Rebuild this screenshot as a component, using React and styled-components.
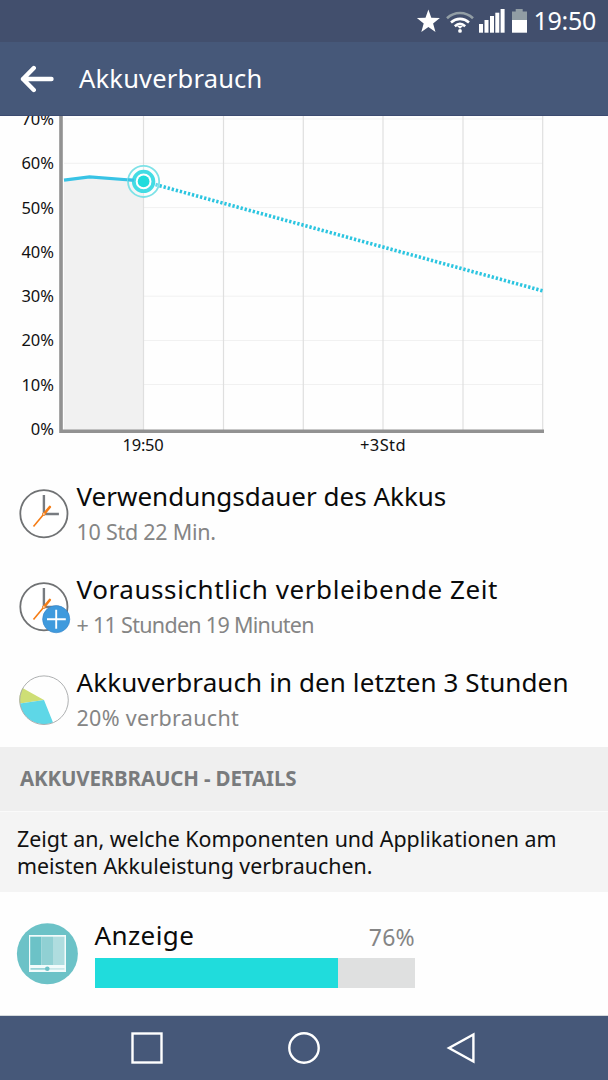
import React from "react";
import styled, { createGlobalStyle } from "styled-components";

const GlobalStyle = createGlobalStyle`
  * {
    box-sizing: border-box;
  }
  body {
    margin: 0;
    background: #fefefe;
    font-family: "Noto Sans", "Open Sans", sans-serif;
  }
  svg {
    display: block;
    flex: none;
  }
`;

const Screen = styled.div`
  width: 608px;
  height: 1080px;
  display: flex;
  flex-direction: column;
  overflow: hidden;
  background: #fefefe;
`;

const StatusBar = styled.div`
  height: 42px;
  flex: none;
  display: flex;
  align-items: center;
  justify-content: flex-end;
  padding-right: 12px;
  background: #424f6d;
  color: #fff;
`;

const Clock = styled.span`
  margin: 0 0 2px 6px;
  font-size: 25px;
  line-height: 40px;
  letter-spacing: -0.3px;
`;

const AppBar = styled.header`
  height: 74px;
  flex: none;
  display: flex;
  align-items: center;
  padding-left: 20px;
  background: #465879;
  border-bottom: 1px solid #3c4b70;
`;

const Heading = styled.h1`
  margin: 0 0 2px 25px;
  font-size: 25.5px;
  font-weight: 400;
  letter-spacing: 0.2px;
  color: #fff;
`;

const ChartSection = styled.section`
  height: 351.5px;
  flex: none;
  overflow: hidden;
`;

const ChartBody = styled.div`
  display: flex;
  height: 317px;
`;

const Scale = styled.div`
  width: 54px;
  margin: -19px 5px 0 0;
`;

const ScaleLabel = styled.div`
  height: 44.3px;
  line-height: 44.3px;
  font-size: 16.5px;
  text-align: right;
  color: #111;
`;

const TimeAxis = styled.div`
  display: flex;
  gap: 160px;
  padding-left: 103px;
`;

const TimeLabel = styled.span`
  width: 80px;
  line-height: 24px;
  font-size: 16.5px;
  letter-spacing: ${props => props.$spacing || 0}px;
  text-align: center;
  color: #111;
`;

const InfoRow = styled.div`
  height: 93.2px;
  flex: none;
  display: flex;
  align-items: center;
  padding-left: 18px;
`;

const InfoText = styled.div`
  margin-left: 5.5px;
  white-space: nowrap;
`;

const InfoTitle = styled.div`
  font-size: 26px;
  line-height: 35px;
  letter-spacing: ${props => props.$spacing || 0}px;
  color: #0a0a0a;
`;

const InfoValue = styled.div`
  font-size: 21.5px;
  line-height: 36px;
  letter-spacing: ${props => props.$spacing || 0}px;
  color: #858585;
`;

const SectionTitle = styled.h2`
  height: 64.5px;
  flex: none;
  margin: 0;
  padding-left: 20px;
  background: #efefef;
  border-bottom: 1px solid #fafafa;
  font-size: 20.5px;
  font-weight: 700;
  line-height: 63px;
  letter-spacing: -0.15px;
  color: #797b7d;
`;

const Description = styled.p`
  height: 80.5px;
  flex: none;
  margin: 0;
  padding: 13px 17px;
  background: #f4f4f4;
  font-size: 21.4px;
  line-height: 27px;
  white-space: nowrap;
  color: #111;
`;

const UsageRow = styled.div`
  height: 124px;
  flex: none;
  display: flex;
  align-items: center;
  padding-left: 16px;
  border-bottom: 1px solid #d5dadd;
`;

const Usage = styled.div`
  width: 320.5px;
  margin: 2px 0 0 16.5px;
`;

const UsageHead = styled.div`
  display: flex;
  justify-content: space-between;
  align-items: baseline;
  height: 36px;
  line-height: 27px;
`;

const UsageName = styled.span`
  font-size: 26px;
  letter-spacing: 0.4px;
  color: #0a0a0a;
`;

const UsagePercent = styled.span`
  position: relative;
  top: 1px;
  font-size: 23px;
  letter-spacing: 0.3px;
  color: #858585;
`;

const Track = styled.div`
  height: 30px;
  background: #dfe0e0;
`;

const Fill = styled.div`
  height: 100%;
  background: #20dcdc;
`;

const NavBar = styled.nav`
  height: 64px;
  flex: none;
  display: flex;
  align-items: center;
  justify-content: center;
  gap: 121px;
  background: #465879;
`;

const StatusIcons = () => (
  <svg width="112" height="30" viewBox="416 6 112 30">
    <path
      d="M428.400 9.500l2.900 8.300 8.600.200-6.800 5.400 2.400 8.700-7.100-5.100-7.100 5.100 2.400-8.700-6.800-5.400 8.600-.200z"
      fill="#fff"
    />
    <g fill="none" strokeWidth="2.600">
      <path d="M447 18.200c7.500-6.900 18.500-6.900 26 0" stroke="#929ea5" />
      <path d="M451 22.400c5.400-4.700 12.600-4.700 18 0" stroke="#fff" />
      <path d="M454.800 26.200c3.200-2.800 7.200-2.800 10.400 0" stroke="#fff" />
    </g>
    <path d="M457 26h6l-3 2.800z" fill="#fff" />
    <circle cx="460" cy="30.900" r="1.900" fill="#fff" />
    <g fill="#fff">
      <rect x="479" y="24" width="4" height="8.700" />
      <rect x="484.500" y="20" width="4" height="12.700" />
      <rect x="490" y="16" width="4" height="16.700" />
      <rect x="495.300" y="12.700" width="4" height="20" />
      <rect x="500.600" y="9" width="4" height="23.700" />
    </g>
    <path d="M512 20v-8.500h3.700V9h7v2.500h4.300V20z" fill="#919da4" />
    <rect x="512" y="20" width="15" height="12.700" fill="#fff" />
  </svg>
);

const BackArrow = () => (
  <svg width="34" height="28" viewBox="0 0 34 28">
    <path
      d="M13.800 3L3 14l10.800 11M3 14h28.500"
      fill="none"
      stroke="#fff"
      strokeWidth="4.400"
      strokeLinecap="round"
      strokeLinejoin="round"
    />
  </svg>
);

const BatteryPlot = () => (
  <svg width="486" height="317" viewBox="59 116 486 317">
    <path d="M64 180l26-3 53 4v249H64z" fill="#f1f1f1" />
    <g stroke="#f1f1f1" strokeWidth="1">
      {[119, 163.300, 207.600, 251.900, 296.200, 340.500, 384.500].map(y => (
        <path key={y} d={`M64 ${y}H543`} />
      ))}
    </g>
    <g stroke="#dfdfdf" strokeWidth="1.200">
      {[143.500, 223.500, 303.300, 383, 463, 542.700].map(x => (
        <path key={x} d={`M${x} 116V430`} />
      ))}
    </g>
    <path d="M61 116V431.200H544" fill="none" stroke="#929292" strokeWidth="3.600" />
    <path d="M64 180.200L89.500 176.900 143 181" fill="none" stroke="#38c3e5" strokeWidth="3.200" />
    <path
      d="M155.500 184.600L544 291.200"
      fill="none"
      stroke="#2cc5e0"
      strokeWidth="3.600"
      strokeDasharray="2.300 1.900"
    />
    <circle cx="143.600" cy="181.400" r="15.600" fill="#fff" fillOpacity="0.300" stroke="#7de2e7" strokeWidth="1.800" />
    <circle cx="143.600" cy="181.400" r="9.800" fill="#fff" stroke="#43dce4" strokeWidth="3.800" />
    <path d="M128 179.700l6 .600" stroke="#38c3e5" strokeWidth="3" />
    <circle cx="143.600" cy="181.400" r="5.900" fill="#20dcdc" />
  </svg>
);

const ClockIcon = ({ plus }) => (
  <svg width="53" height="54" viewBox="18 487 53 54">
    <circle cx="43.900" cy="513.700" r="23.600" fill="#fff" stroke="#707274" strokeWidth="1.800" />
    <path d="M43.900 495v19h15" fill="none" stroke="#777b80" strokeWidth="2.400" />
    <path d="M33.500 526.500L46 511.500" stroke="#f57c14" strokeWidth="1.600" />
    <path d="M44 514l5.800-7" stroke="#f57c14" strokeWidth="2.600" strokeLinecap="round" />
    <circle cx="43.900" cy="514" r="1.300" fill="#fff" stroke="#f57c14" strokeWidth="1" />
    {plus && (
      <g>
        <circle cx="56.200" cy="526.200" r="13.600" fill="#3f9add" stroke="#3583c8" strokeWidth="0.600" />
        <path d="M47 526.200h18.800M56.200 516.700v19" stroke="#fff" strokeWidth="1.900" />
      </g>
    )}
  </svg>
);

const PieIcon = () => (
  <svg width="53" height="54" viewBox="18 673 53 54">
    <path d="M44 700L22.500 688A24.500 24.500 0 0 0 19.700 703.600z" fill="#cede75" />
    <path d="M44 700L19.900 703.600A24.500 24.500 0 0 0 53 722.600z" fill="#5ed7e7" />
    <circle cx="44" cy="700.200" r="24.300" fill="none" stroke="#a5a7a8" strokeWidth="0.900" />
  </svg>
);

const DisplayIcon = () => (
  <svg width="62" height="62" viewBox="16 923 62 62">
    <circle cx="47.400" cy="953.800" r="30.500" fill="#6cc2c7" />
    <rect x="29" y="935" width="37" height="37" fill="#f2fbfb" />
    <rect x="30.200" y="936.700" width="11.300" height="28.300" fill="#6cc2c7" />
    <rect x="41.500" y="936.700" width="11.500" height="28.300" fill="#90d0d3" />
    <rect x="53" y="936.700" width="11.500" height="28.300" fill="#afdddf" />
    <path d="M30.500 968.900h17" stroke="#88cdd1" strokeWidth="1.500" />
    <path d="M48 968.900h16.500" stroke="#c3e5e7" strokeWidth="1.500" />
    <circle cx="47.300" cy="968.800" r="2.300" fill="#6cc2c7" />
  </svg>
);

const NavIcon = ({ children }) => (
  <svg width="36" height="36" viewBox="0 0 36 36" fill="none" stroke="#fff" strokeWidth="2.400">
    {children}
  </svg>
);

const infos = [
  {
    title: "Verwendungsdauer des Akkus",
    value: "10 Std 22 Min.",
    icon: <ClockIcon />,
    titleSpacing: 0,
    valueSpacing: -0.25
  },
  {
    title: "Voraussichtlich verbleibende Zeit",
    value: "+ 11 Stunden 19 Minuten",
    icon: <ClockIcon plus />,
    titleSpacing: 0.58,
    valueSpacing: -0.7
  },
  {
    title: "Akkuverbrauch in den letzten 3 Stunden",
    value: "20% verbraucht",
    icon: <PieIcon />,
    titleSpacing: 0.1,
    valueSpacing: 0.3
  }
];

const App = () => (
  <Screen>
    <GlobalStyle />
    <StatusBar>
      <StatusIcons />
      <Clock>19:50</Clock>
    </StatusBar>
    <AppBar>
      <BackArrow />
      <Heading>Akkuverbrauch</Heading>
    </AppBar>
    <ChartSection>
      <ChartBody>
        <Scale>
          {[70, 60, 50, 40, 30, 20, 10, 0].map(level => (
            <ScaleLabel key={level}>{level}%</ScaleLabel>
          ))}
        </Scale>
        <BatteryPlot />
      </ChartBody>
      <TimeAxis>
        <TimeLabel $spacing={-0.2}>19:50</TimeLabel>
        <TimeLabel $spacing={0.4}>+3Std</TimeLabel>
      </TimeAxis>
    </ChartSection>
    {infos.map(info => (
      <InfoRow key={info.title}>
        {info.icon}
        <InfoText>
          <InfoTitle $spacing={info.titleSpacing}>{info.title}</InfoTitle>
          <InfoValue $spacing={info.valueSpacing}>{info.value}</InfoValue>
        </InfoText>
      </InfoRow>
    ))}
    <SectionTitle>AKKUVERBRAUCH - DETAILS</SectionTitle>
    <Description>
      Zeigt an, welche Komponenten und Applikationen am
      <br />
      meisten Akkuleistung verbrauchen.
    </Description>
    <UsageRow>
      <DisplayIcon />
      <Usage>
        <UsageHead>
          <UsageName>Anzeige</UsageName>
          <UsagePercent>76%</UsagePercent>
        </UsageHead>
        <Track>
          <Fill style={{ width: "76%" }} />
        </Track>
      </Usage>
    </UsageRow>
    <NavBar>
      <NavIcon>
        <rect x="3.500" y="3.500" width="29" height="29" />
      </NavIcon>
      <NavIcon>
        <circle cx="18" cy="18" r="14.700" />
      </NavIcon>
      <NavIcon>
        <path d="M30.400 4.500v27L6 18z" />
      </NavIcon>
    </NavBar>
  </Screen>
);

export default App;
